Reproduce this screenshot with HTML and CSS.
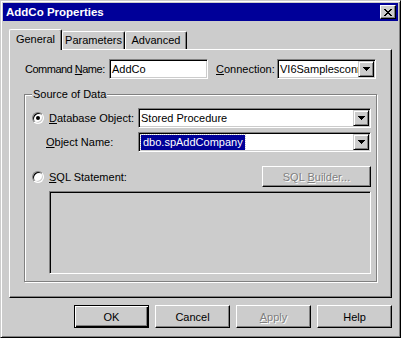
FILE: index.html
```html
<!DOCTYPE html>
<html lang="en">
<head>
  <meta charset="UTF-8" />
  <title>AddCo Properties</title>
  <link rel="stylesheet" href="styles.css">
</head>
<body>
  <div class="window">
    <div class="titlebar">
      <span class="title">AddCo Properties</span>
      <button class="close-btn">
        <svg width="8" height="7" viewBox="0 0 8 7" shape-rendering="crispEdges"><path fill="#000" d="M0 0h2v1H0zM6 0h2v1H6zM1 1h2v1H1zM5 1h2v1H5zM2 2h4v1H2zM3 3h2v1H3zM2 4h4v1H2zM1 5h2v1H1zM5 5h2v1H5zM0 6h2v1H0zM6 6h2v1H6z"/></svg>
      </button>
    </div>

    <div class="dialog-body">
      <div class="tabs">
        <div class="tab tab-general active">General</div>
        <div class="tab tab-params">Parameters</div>
        <div class="tab tab-advanced">Advanced</div>
      </div>

      <div class="tab-panel">
        <div class="row row-top">
          <span class="lbl lbl-command">Command <u>N</u>ame:</span>
          <div class="edit edit-command">AddCo</div>
          <span class="lbl lbl-connection"><u>C</u>onnection:</span>
          <div class="combo combo-connection">
            <span class="combo-text">VI6Samplesconn</span>
            <span class="drop-btn"><svg width="7" height="4" viewBox="0 0 7 4" shape-rendering="crispEdges"><path fill="#000" d="M0 0h7v1H0zM1 1h5v1H1zM2 2h3v1H2zM3 3h1v1H3z"/></svg></span>
          </div>
        </div>

        <div class="group">
          <div class="group-title">Source of Data</div>

          <div class="row row-db">
            <span class="radio checked"></span>
            <span class="lbl lbl-db"><u>D</u>atabase Object:</span>
            <div class="combo combo-wide">
              <span class="combo-text">Stored Procedure</span>
              <span class="drop-btn"><svg width="7" height="4" viewBox="0 0 7 4" shape-rendering="crispEdges"><path fill="#000" d="M0 0h7v1H0zM1 1h5v1H1zM2 2h3v1H2zM3 3h1v1H3z"/></svg></span>
            </div>
          </div>

          <div class="row row-obj">
            <span class="lbl lbl-obj"><u>O</u>bject Name:</span>
            <div class="combo combo-wide">
              <span class="combo-text"><span class="selected">dbo.spAddCompany</span></span>
              <span class="drop-btn"><svg width="7" height="4" viewBox="0 0 7 4" shape-rendering="crispEdges"><path fill="#000" d="M0 0h7v1H0zM1 1h5v1H1zM2 2h3v1H2zM3 3h1v1H3z"/></svg></span>
            </div>
          </div>

          <div class="row row-sql">
            <span class="radio"></span>
            <span class="lbl lbl-sql"><u>S</u>QL Statement:</span>
            <button class="btn btn-builder" disabled>SQL <u>B</u>uilder...</button>
          </div>

          <div class="sql-box"></div>
        </div>
      </div>

      <div class="buttons">
        <button class="btn btn-default">OK</button>
        <button class="btn">Cancel</button>
        <button class="btn" disabled><u>A</u>pply</button>
        <button class="btn">Help</button>
      </div>
    </div>
  </div>
</body>
</html>
```

FILE: styles.css
```css
body {
  margin: 0;
  font-family: "Liberation Sans", Arial, sans-serif;
  font-size: 11px;
  color: #000;
  background: #ccc;
}

.window {
  width: 401px;
  height: 338px;
  box-sizing: border-box;
  padding: 2px;
  background: #ccc;
  border: 1px solid;
  border-color: #ccc #000 #000 #ccc;
  box-shadow: inset 1px 1px #fff, inset -1px -1px #808080;
}

.titlebar {
  height: 18px;
  display: flex;
  align-items: center;
  padding: 0 2px 0 3px;
  background: #000099;
}

.title {
  flex: 1;
  color: #fff;
  font-weight: bold;
  font-size: 11.5px;
}

.close-btn {
  width: 16px;
  height: 14px;
  padding: 0;
  box-sizing: border-box;
  display: flex;
  align-items: center;
  justify-content: center;
  background: #ccc;
  border: 1px solid;
  border-color: #fff #000 #000 #fff;
  box-shadow: inset -1px -1px #808080;
}

.dialog-body {
  padding: 0 6px;
}

/* tabs */
.tabs {
  display: flex;
  align-items: flex-end;
  height: 21px;
  margin-top: 8px;
  margin-bottom: -1px;
  position: relative;
  z-index: 1;
}

.tab {
  height: 18px;
  margin-bottom: 1px;
  box-sizing: border-box;
  display: flex;
  align-items: center;
  justify-content: center;
  padding-bottom: 2px;
  background: #ccc;
  border: 1px solid;
  border-bottom: 0;
  border-color: #fff #000 #000 #fff;
  border-radius: 2px 2px 0 0;
  box-shadow: inset -1px 0 #808080;
}

.tab.active {
  height: 21px;
  margin-bottom: 0;
}

.tab-general { width: 53px; }
.tab-params { width: 63px; }
.tab-advanced { width: 62px; }

.tab-panel {
  height: 249px;
  box-sizing: border-box;
  padding: 9px 14px 0;
  border: 1px solid;
  border-color: #fff #000 #000 #fff;
  box-shadow: inset -1px -1px #808080;
}

/* rows and labels */
.row {
  display: flex;
  align-items: center;
}

.lbl {
  white-space: nowrap;
}

.row-top { height: 20px; }
.lbl-command { width: 84px; margin-left: 1px; letter-spacing: -0.5px; }
.lbl-connection { width: 61px; margin-left: 8px; }

.edit,
.combo {
  height: 20px;
  box-sizing: border-box;
  background: #fff;
  border: 1px solid;
  border-color: #808080 #fff #fff #808080;
  box-shadow: inset 1px 1px #000, inset -1px -1px #ccc;
}

.edit {
  padding-left: 2px;
  line-height: 18px;
}

.edit-command { width: 99px; }

.combo {
  display: flex;
  padding: 1px;
}

.combo-text {
  flex: 1;
  overflow: hidden;
  white-space: nowrap;
  padding-left: 1px;
  line-height: 16px;
}

.combo-connection { width: 99px; }
.combo-wide { width: 233px; }

.selected {
  display: inline-block;
  padding: 0 2px;
  line-height: 15px;
  background: #000099;
  color: #fff;
  outline: 1px dotted #ccc;
}

.drop-btn {
  width: 16px;
  height: 16px;
  box-sizing: border-box;
  display: flex;
  align-items: center;
  justify-content: center;
  background: #ccc;
  border: 1px solid;
  border-color: #ccc #000 #000 #ccc;
  box-shadow: inset 1px 1px #fff, inset -1px -1px #808080;
}

/* group box */
.group {
  width: 353px;
  height: 188px;
  margin-top: 15px;
  box-sizing: border-box;
  padding-left: 7px;
  border: 1px solid #808080;
  box-shadow: inset 1px 1px #fff, 1px 1px #fff;
}

.group-title {
  width: fit-content;
  margin: -7px 0 0 0;
  padding: 0 1px;
  line-height: 13px;
  background: #ccc;
}

.row-db { height: 20px; margin-top: 7px; }
.row-obj { height: 20px; margin-top: 4px; }
.row-sql { height: 21px; margin-top: 14px; }

.lbl-db { width: 89px; }
.lbl-obj { width: 92px; margin-left: 14px; }
.lbl-sql { width: 213px; }

.radio {
  width: 12px;
  height: 12px;
  margin-right: 5px;
  box-sizing: border-box;
  border-radius: 50%;
  background: #fff;
  border: 1px solid;
  border-color: #808080 #fff #fff #808080;
  box-shadow: inset 1px 1px #000, inset -1px -1px #ccc;
  display: flex;
  align-items: center;
  justify-content: center;
}

.radio.checked::after {
  content: "";
  width: 4px;
  height: 4px;
  border-radius: 50%;
  background: #000;
}

.sql-box {
  width: 322px;
  height: 83px;
  margin: 4px 0 0 17px;
  box-sizing: border-box;
  background: #ccc;
  border: 1px solid;
  border-color: #808080 #fff #fff #808080;
  box-shadow: inset 1px 1px #000, inset -1px -1px #ccc;
}

/* push buttons */
.btn {
  width: 75px;
  height: 23px;
  padding: 0;
  box-sizing: border-box;
  font-family: "Liberation Sans", Arial, sans-serif;
  font-size: 11px;
  color: #000;
  background: #ccc;
  border: 1px solid;
  border-color: #fff #000 #000 #fff;
  box-shadow: inset -1px -1px #808080;
}

.btn:disabled {
  color: #808080;
  text-shadow: 1px 1px #fff;
}

.btn-default {
  border-color: #000;
  box-shadow: inset 1px 1px #fff, inset -1px -1px #000, inset -2px -2px #808080;
}

.btn-builder {
  width: 109px;
  height: 21px;
}

.buttons {
  display: flex;
  justify-content: flex-end;
  gap: 6px;
  margin-top: 7px;
}
```
